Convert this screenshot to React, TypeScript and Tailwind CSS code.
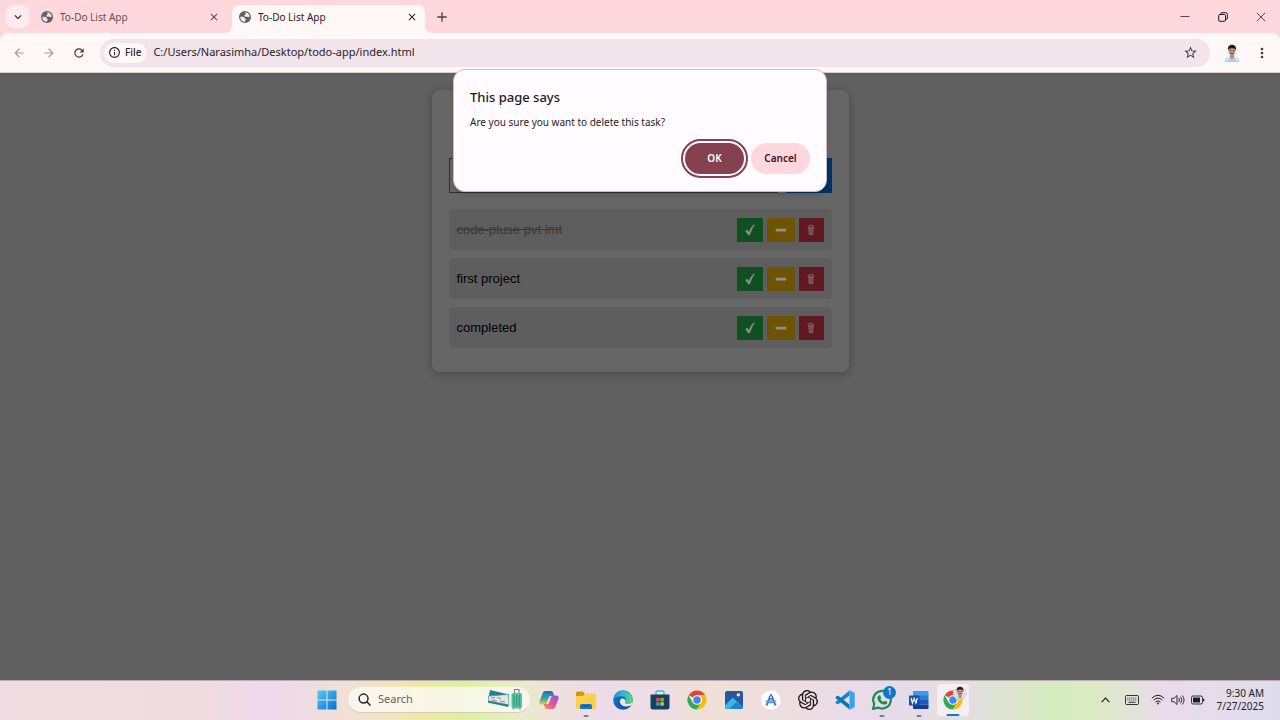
import { useState } from "react";
import type { ReactNode } from "react";
import { MdAdd, MdArrowBack, MdArrowForward, MdClose, MdExpandMore, MdInfoOutline, MdMoreVert, MdRefresh, MdStarBorder } from "react-icons/md";
import { SiOpenai } from "react-icons/si";

const TASKS = [
  { title: "code-pluse pvt lmt", done: true },
  { title: "first project", done: false },
  { title: "completed", done: false },
];

function Portrait({ className }: { className: string }) {
  return (
    <svg viewBox="0 0 16 18" className={className} aria-hidden="true">
      <path d="M0.500 18C0.800 13.500 4 12.600 8 12.600s7.200 0.900 7.500 5.400z" fill="#a9d0e8" />
      <path d="M2 17l3-3.600M14 17l-3-3.600" stroke="#e6f4fb" strokeWidth="1.200" />
      <path d="M6 10h4v3.200L8 15l-2-1.800z" fill="#b98a74" />
      <ellipse cx="8" cy="7" rx="3.600" ry="4.600" fill="#c59a86" />
      <path d="M4 6.800C3.400 3 5 0.800 8 0.800s4.600 2.200 4 6C11.600 5 10.500 4.200 8 4.300S4.400 5 4 6.800z" fill="#22191c" />
      <path d="M5.600 6.600h1.600M8.800 6.600h1.600M6.500 9.300h3" stroke="#3c2622" strokeWidth="0.800" />
    </svg>
  );
}

function Globe({ land }: { land: string }) {
  return (
    <svg viewBox="0 0 24 24" className="size-3 shrink-0" aria-hidden="true">
      <circle cx="12" cy="12" r="12" fill="#5c6168" />
      <path d="M2.500 11.500c3 0.300 6.500-0.200 8.500 1.500 1.500 1.300 0.300 2.300 2 3 1.600 0.700 0.500 2.500-0.500 3.200-0.800 0.600-0.600 1.500-0.500 2.400C6.500 21.600 2.300 17.500 2.500 11.500z" fill={land} />
      <path d="M12.500 2.500c4.500 0.200 8.600 3.600 9 8.500-1.500 1.800-3.300 1.500-4.500 0.700-1-0.700-2.500 0.500-4-0.200-1.600-0.800-2.700-1.500-2.200-3 0.400-1.200 1.900-1 2.400-2.200 0.400-1-1.200-2.200-0.700-3.800z" fill={land} />
    </svg>
  );
}

function Tab({ active = false }: { active?: boolean }) {
  return (
    <div
      className={
        active
          ? "relative flex h-7 w-[193px] items-center rounded-t-lg bg-[#fff8f6] px-[7px] pb-1 text-[#2a2024] before:absolute before:bottom-0 before:-left-2 before:size-2 before:bg-[radial-gradient(circle_at_0_0,transparent_8px,#fff8f6_8px)] after:absolute after:-right-2 after:bottom-0 after:size-2 after:bg-[radial-gradient(circle_at_100%_0,transparent_8px,#fff8f6_8px)]"
          : "flex h-7 w-[200px] items-center pr-3 pb-1 pl-[9px] text-[#6a4a52]"
      }
    >
      <Globe land={active ? "#f0ebec" : "#f6dade"} />
      <span className="ml-[7px] flex-1 truncate text-[10px] leading-6">To-Do List App</span>
      <button aria-label="Close tab" className={active ? "text-[#2a2024]" : "text-[#6a3f4a]"}>
        <MdClose className="size-3" />
      </button>
    </div>
  );
}

function BrowserHeader() {
  return (
    <header className="bg-[#ffd8de]">
      <div className="flex h-[33px] items-end pl-1.5">
        <button aria-label="Search tabs" className="mb-[5px] flex size-[23px] items-center justify-center rounded-lg bg-[#ffecef] text-[#2a1a1e]">
          <MdExpandMore className="size-[14px]" />
        </button>
        <div className="ml-[3px] flex">
          <Tab />
          <Tab active />
        </div>
        <button aria-label="New tab" className="mb-2 ml-[9px] text-[#5a3a42]">
          <MdAdd className="size-4" />
        </button>
        <div className="flex flex-1 items-center justify-end gap-7 self-center pr-3.5 text-[#4a3338]">
          <button aria-label="Minimize">
            <svg viewBox="0 0 10 10" className="size-2.5" aria-hidden="true"><path d="M0.500 4.500h9" stroke="currentColor" strokeWidth="0.900" /></svg>
          </button>
          <button aria-label="Restore">
            <svg viewBox="0 0 10 10" className="size-2.5 text-[#20181a]" fill="none" stroke="currentColor" aria-hidden="true">
              <rect x="0.700" y="2.500" width="6.800" height="6.800" rx="1.200" />
              <path d="M2.800 2.300V1.900q0-1.200 1.200-1.200h3.800q1.600 0 1.600 1.600v3.800q0 1.200-1.200 1.200H7.800" />
            </svg>
          </button>
          <button aria-label="Close window">
            <svg viewBox="0 0 10 10" className="size-2.5" aria-hidden="true"><path d="M0.800 0.800l8.400 8.400M9.200 0.800L0.800 9.200" stroke="currentColor" strokeWidth="0.900" /></svg>
          </button>
        </div>
      </div>
      <div className="flex h-10 items-center rounded-t-lg border-b border-[#d9cdd0] bg-[#fff8f6] pr-2.5 pl-3">
        <button aria-label="Back" className="text-[#a79a9d]"><MdArrowBack className="size-[14px]" /></button>
        <button aria-label="Forward" className="ml-4 text-[#a79a9d]"><MdArrowForward className="size-[14px]" /></button>
        <button aria-label="Reload" className="ml-4 text-[#54383f]"><MdRefresh className="size-[14px]" /></button>
        <div className="ml-3.5 flex h-7 flex-1 items-center rounded-full bg-[#f1e4eb] pr-3 pl-1">
          <button className="flex h-5 items-center gap-1 rounded-full bg-[#fff8f8] pr-1.5 pl-1 text-[10px] font-medium text-[#2d2226]">
            <MdInfoOutline className="size-[13px]" />
            File
          </button>
          <input
            aria-label="Address"
            defaultValue="C:/Users/Narasimha/Desktop/todo-app/index.html"
            className="ml-1.5 min-w-0 flex-1 bg-transparent text-[11px] text-[#2a2226] outline-none"
          />
          <button aria-label="Bookmark this page" className="text-[#4d3a40]"><MdStarBorder className="size-[15px]" /></button>
        </div>
        <button aria-label="Profile" className="ml-3.5"><Portrait className="h-[18px] w-4" /></button>
        <button aria-label="More options" className="ml-3.5 text-[#4d353b]"><MdMoreVert className="size-4" /></button>
      </div>
    </header>
  );
}

function TaskRow({ title, done }: { title: string; done: boolean }) {
  return (
    <li className="flex h-[41px] items-center gap-1 rounded bg-[#5e5e5e] px-2">
      <span className={done ? "flex-1 text-[#393939] line-through" : "flex-1 text-black"}>{title}</span>
      <button aria-label="Complete" className="flex h-6 w-[26px] items-center justify-center bg-[#104f20]">
        <svg viewBox="0 0 12 12" className="size-3" aria-hidden="true"><path d="M1.600 7l1.600-1 1.700 2.400C6 5.500 7.600 2.800 9.700 0.700L10.400 1.100C8.400 4 7 7 5.700 10.900H4.300z" fill="#8e8e8e" stroke="#8e8e8e" strokeWidth="0.500" /></svg>
      </button>
      <button aria-label="Undo" className="flex h-6 w-7 items-center justify-center bg-[#6e5303]">
        <svg viewBox="0 0 12 12" className="size-3" aria-hidden="true"><rect x="0.700" y="4.700" width="10.600" height="2.800" rx="0.700" fill="#8e8e8e" /></svg>
      </button>
      <button aria-label="Delete" className="flex h-6 w-[25px] items-center justify-center bg-[#611820]">
        <svg viewBox="0 0 12 12" className="size-3" aria-hidden="true">
          <path d="M3.400 3.200h5.200l-0.400 7.600q-2.200 0.700-4.400 0z" fill="#806769" />
          <ellipse cx="6" cy="2.700" rx="3" ry="1.300" fill="#5a3034" stroke="#8e7779" strokeWidth="0.700" />
          <path d="M4.900 4.500v5.800M6 4.500v5.800M7.100 4.500v5.800" stroke="#5a3034" strokeWidth="0.500" />
        </svg>
      </button>
    </li>
  );
}

function ConfirmDialog() {
  return (
    <div role="alertdialog" aria-labelledby="confirm-title" className="absolute -top-1 left-1/2 w-[374px] -translate-x-1/2 rounded-xl border border-[#c9bcc3] bg-[#fffbff] px-4 pt-[18px] pb-[17px] shadow-md">
      <h2 id="confirm-title" className="text-[13px] leading-[18px] font-medium text-[#201a1c]">This page says</h2>
      <p className="mt-2 text-[10px] leading-4 text-[#2b2326]">Are you sure you want to delete this task?</p>
      <div className="mt-[13px] flex justify-end gap-[7px] text-[10px] font-semibold">
        <button className="h-[31px] w-[59px] rounded-full bg-[#85414f] text-white outline-2 outline-offset-2 outline-[#85414f]">OK</button>
        <button className="h-[31px] w-[59px] rounded-full bg-[#ffd8de] text-[#3f0d1b]">Cancel</button>
      </div>
    </div>
  );
}

function TodoPage() {
  const [draft, setDraft] = useState("");
  return (
    <main className="relative flex-1 bg-[#606060] pt-[17px] font-['Liberation_Sans',sans-serif]">
      <section className="mx-auto w-[417px] rounded-lg bg-[#666666] px-[17px] pt-[68px] pb-6 shadow-[0_2px_10px_rgba(0,0,0,0.25)]">
        <form className="flex h-[35px] gap-2" onSubmit={(event) => event.preventDefault()}>
          <input aria-label="New task" value={draft} onChange={(event) => setDraft(event.target.value)} className="min-w-0 flex-1 border border-[#2f2f2f] bg-[#666666] px-2 outline-none" />
          <button aria-label="Add task" className="w-[46px] bg-[#003166]" />
        </form>
        <ul className="mt-4 flex flex-col gap-2 text-[13px] leading-5">
          {TASKS.map((task) => <TaskRow key={task.title} {...task} />)}
        </ul>
      </section>
      <div className="font-['Noto_Sans',sans-serif]"><ConfirmDialog /></div>
    </main>
  );
}

function ChromeLogo({ className }: { className: string }) {
  return (
    <svg viewBox="0 0 48 48" className={className} aria-hidden="true">
      <circle cx="24" cy="24" r="23" fill="#fff" />
      <path d="M24 24L4.080 12.500A23 23 0 0 1 43.920 12.500H24z" fill="#ea4335" />
      <path d="M4.080 12.500A23 23 0 0 0 24 47L34 29.700 24 24 14 29.700z" fill="#34a853" />
      <path d="M43.920 12.500A23 23 0 0 1 24 47L34 29.700A11.500 11.500 0 0 0 24 12.500z" fill="#fbbc05" />
      <circle cx="24" cy="24" r="11.500" fill="#fff" />
      <circle cx="24" cy="24" r="9" fill="#4285f4" />
    </svg>
  );
}

function AppButton({ label, running = false, children }: { label: string; running?: boolean; children: ReactNode }) {
  return (
    <button aria-label={label} className="relative flex h-8 w-[37px] items-center justify-center">
      {children}
      {running && <span className="absolute -bottom-px left-1/2 h-0.5 w-[5px] -translate-x-1/2 rounded-full bg-[#85797e]" />}
    </button>
  );
}

function Taskbar() {
  return (
    <footer className="flex h-10 items-center border-t border-[#b9adb0] bg-[linear-gradient(90deg,#f0dce2_0%,#f0dce0_16%,#eed9ec_21%,#f1dfdc_26%,#f0e5c4_30%,#ede8a6_33%,#deefa2_36%,#e6eec4_40%,#efe1dc_43%,#ecdcea_47%,#efe0d9_56%,#eddde2_63%,#e6dbea_69%,#e3dfdf_76%,#d6ebc0_82%,#daebc0_85%,#eadbeb_91%,#dedcec_100%)] pb-0.5">
      <nav aria-label="Applications" className="ml-[308px] flex items-center">
        <AppButton label="Start">
          <svg viewBox="0 0 20 20" className="size-5" aria-hidden="true">
            <defs><linearGradient id="start" x1="0" y1="0" x2="1" y2="1"><stop stopColor="#55ccf8" /><stop offset="1" stopColor="#0870cc" /></linearGradient></defs>
            <path d="M0.500 0.500h9v9h-9zM10.500 0.500h9v9h-9zM0.500 10.500h9v9h-9zM10.500 10.500h9v9h-9z" fill="url(#start)" />
          </svg>
        </AppButton>
        <label className="ml-[3px] flex h-[26px] w-[182px] items-center rounded-full border-b border-[#d8cdbb] bg-[#fdfaf4]/80 pr-[7px] pl-2.5">
          <svg viewBox="0 0 14 14" className="size-[13px] shrink-0" fill="none" stroke="#262326" strokeWidth="1.600" aria-hidden="true"><circle cx="6" cy="6" r="4.800" /><path d="M9.500 9.500l4 4" /></svg>
          <input type="search" aria-label="Search" placeholder="Search" className="ml-[7px] w-[70px] min-w-0 flex-1 bg-transparent text-[11px] text-[#5f5b58] outline-none placeholder:text-[#66615e]" />
          <svg viewBox="0 0 36 22" className="h-[22px] w-9 shrink-0" aria-hidden="true">
            <path d="M3 2l19 4.500-1 6L1.500 9z" fill="#277f91" />
            <path d="M1.500 8l20-1.500 0.500 11-20.500-3z" fill="#d9edef" stroke="#4c98a2" strokeWidth="0.700" />
            <path d="M1.500 12.500l20 4-0.500 2.500-20-4.500z" fill="#2c8192" />
            <path d="M4 10l4-0.500M10 9.500l4 1M5 12l5 1M13 13l5 1" stroke="#d06f60" strokeWidth="1" />
            <path d="M27.500 6V1.500h4.500V6" fill="none" stroke="#777f80" strokeWidth="1.100" />
            <rect x="24.500" y="5" width="10.500" height="15.500" rx="2" fill="#54bda4" />
            <path d="M27 7v11M29.700 7v11M32.400 7v11" stroke="#2f957f" strokeWidth="0.900" />
            <path d="M26.500 20.500v1M33 20.500v1" stroke="#47645d" strokeWidth="1.200" />
          </svg>
        </label>
        <AppButton label="Copilot">
          <svg viewBox="0 0 20 20" className="size-5" aria-hidden="true">
            <defs>
              <linearGradient id="cpa" x1="0" y1="0" x2="0" y2="1"><stop stopColor="#1c68c8" /><stop offset="0.550" stopColor="#31a9a0" /><stop offset="1" stopColor="#eccb2d" /></linearGradient>
              <linearGradient id="cpb" x1="1" y1="0" x2="0" y2="1"><stop stopColor="#8955e8" /><stop offset="0.550" stopColor="#e65693" /><stop offset="1" stopColor="#f79a4e" /></linearGradient>
            </defs>
            <path d="M15.200 6L14.200 2.500Q13.700 0.900 12 0.900H6.500Q4.500 0.900 3.800 3L0.500 11.200Q-0.200 14.500 2.600 14.500H5.500Q7.500 14.500 8.100 12.500L9.700 7.500Q10.200 6 11.700 6z" fill="url(#cpa)" />
            <path d="M4.800 14L5.800 17.500Q6.300 19.100 8 19.100H13.500Q15.500 19.100 16.200 17L19.500 8.800Q20.200 5.500 17.400 5.500H14.500Q12.500 5.500 11.900 7.500L10.300 12.500Q9.800 14 8.300 14z" fill="url(#cpb)" />
          </svg>
        </AppButton>
        <AppButton label="File Explorer" running>
          <svg viewBox="0 0 22 20" className="h-5 w-[22px]" aria-hidden="true">
            <path d="M1 3q0-1.500 1.500-1.500H8l2 2.500-2 2H1z" fill="#d99613" />
            <path d="M1 6h7.500L11 3.500h9q1.200 0 1.200 1.200v12.800q0 1.500-1.500 1.500H2.500Q1 19 1 17.500z" fill="#fdd04b" />
            <path d="M5 19v-3.500Q5 14 6.500 14h9Q17 14 17 15.500V19z" fill="#1779c6" /><path d="M7.500 16h7" stroke="#0a4f8e" strokeWidth="1" />
          </svg>
        </AppButton>
        <AppButton label="Edge">
          <svg viewBox="0 0 20 20" className="size-5" aria-hidden="true">
            <defs>
              <linearGradient id="eda" x1="0" y1="0.500" x2="1" y2="0.500"><stop stopColor="#258fdc" /><stop offset="0.550" stopColor="#30bed0" /><stop offset="1" stopColor="#68d65c" /></linearGradient>
              <linearGradient id="edb" x1="0" y1="0" x2="1" y2="1"><stop stopColor="#1680d4" /><stop offset="1" stopColor="#0c4494" /></linearGradient>
            </defs>
            <circle cx="10" cy="10" r="9.800" fill="url(#edb)" />
            <path d="M0.300 9.500A9.800 9.800 0 0 1 19.800 9.500C20 12.600 17.600 14 15 14c-2.200 0-3.300-0.800-2.700-1.800 1.800-3-0.300-5.900-4-5.900C4.600 6.300 1.400 7.500 0.300 9.500z" fill="url(#eda)" />
            <path d="M8.500 8.500c-1.500 1-2 3-1.200 4.700 1.400 3.200 5.700 4.300 10.900 2l0.800-0.700 1-3.500C19 13.300 17 14 15 14c-2.200 0-3.300-0.800-2.700-1.800 0.800-1.500-0.300-4-3.800-3.700z" fill="#f1e5e4" />
          </svg>
        </AppButton>
        <AppButton label="Microsoft Store">
          <svg viewBox="0 0 20 20" className="size-5" aria-hidden="true">
            <path d="M6 5V2.500Q6 1 7.500 1h5Q14 1 14 2.500V5" fill="none" stroke="#35b6df" strokeWidth="1.400" />
            <path d="M0.500 4.500h19v12.500q0 2.500-2.500 2.500H3Q0.500 19.500 0.500 17z" fill="#173f68" />
            <path d="M6.200 8h3.400v3.400H6.200z" fill="#ef5327" /><path d="M10.400 8h3.400v3.400h-3.400z" fill="#80ba2d" /><path d="M6.200 12.200h3.400v3.400H6.200z" fill="#27a4e8" /><path d="M10.400 12.200h3.400v3.400h-3.400z" fill="#fbb921" />
          </svg>
        </AppButton>
        <AppButton label="Chrome"><ChromeLogo className="size-5" /></AppButton>
        <AppButton label="Photos">
          <svg viewBox="0 0 20 20" className="size-5" aria-hidden="true">
            <rect x="1" y="1" width="18" height="18" rx="2" fill="#28589f" />
            <path d="M1 15.500l6.700-7q1-1 2 0L19 17q-0.300 2-2 2H3q-2 0-2-2z" fill="#3ab8ec" /><path d="M5 19l7.500-7L19 17q-0.300 2-2 2z" fill="#1c83d3" />
            <circle cx="14.300" cy="4.800" r="1.600" fill="#fff" />
          </svg>
        </AppButton>
        <AppButton label="Android Studio">
          <svg viewBox="0 0 20 20" className="size-5" fill="none" aria-hidden="true">
            <circle cx="10" cy="10" r="9.700" fill="#fdfdff" />
            <path d="M10 4v2.500" stroke="#35608e" strokeWidth="1.400" />
            <path d="M9.300 6.500L5.500 15.500M10.700 6.500l3.800 9" stroke="#3e7fe0" strokeWidth="2.100" />
            <path d="M4.800 10.800q5.200 3.800 10.400 0" stroke="#4f91e8" strokeWidth="1.400" />
            <circle cx="10" cy="7.300" r="1.600" stroke="#285ea8" strokeWidth="1.100" fill="#fff" /><path d="M10 9.500v3" stroke="#3eb978" strokeWidth="1.500" />
          </svg>
        </AppButton>
        <AppButton label="ChatGPT"><SiOpenai className="size-5 text-[#171417]" /></AppButton>
        <AppButton label="Visual Studio Code">
          <svg viewBox="0 0 20 20" className="size-5" aria-hidden="true">
            <path d="M14.500 0.500v5L3.200 14.300 1.800 14 0.500 12.800V12z" fill="#1685ca" />
            <path d="M14.500 19.500v-5L3.200 5.700 1.800 6 0.500 7.200V8z" fill="#1072b5" />
            <path d="M14.500 0.300l4.500 2.200q0.700 0.300 0.700 1.200v12.600q0 0.900-0.700 1.200l-4.500 2.200z" fill="#33a6ef" />
          </svg>
        </AppButton>
        <AppButton label="WhatsApp" running>
          <svg viewBox="0 0 22 22" className="size-[22px]" fill="none" aria-hidden="true">
            <path d="M2 20l1.300-5A8.800 8.800 0 1 1 7 18.600z" stroke="#1d8a4e" strokeWidth="2.200" strokeLinejoin="round" />
            <path d="M7.600 6.400l1.500-0.200 1.200 2.700-1 1.300q1.100 2 3.300 2.900l1.200-1.300 2.500 1.200q0 2.600-2.900 2.600-5.600-0.700-7.100-6.300 0-1.900 1.300-2.900z" fill="#1d8a4e" />
          </svg>
          <span className="absolute top-0.5 right-1 flex size-[13px] items-center justify-center rounded-full bg-[#0878d0] text-[9px] text-white">1</span>
        </AppButton>
        <AppButton label="Word" running>
          <svg viewBox="0 0 20 20" className="size-5" aria-hidden="true">
            <path d="M5 1h13.500q1 0 1 1v4H4V2q0-1 1-1z" fill="#3e9ae8" /><path d="M4 5.500h15.500V10H4z" fill="#2b7cd3" /><path d="M4 10h15.500v4.500H4z" fill="#185abd" /><path d="M4 14.500h15.500V18q0 1-1 1H5q-1 0-1-1z" fill="#103f91" />
            <rect y="5.500" width="10.500" height="10" rx="0.800" fill="#174faa" />
            <path d="M2 8l1.400 5 1.700-4.500L6.900 13 8.300 8" fill="none" stroke="#fff" strokeWidth="1.200" />
          </svg>
        </AppButton>
        <button aria-label="Chrome, Narasimha" className="relative flex size-8 items-center justify-center rounded bg-[#f7eef0]">
          <ChromeLogo className="size-5" />
          <span className="absolute top-0.5 right-0.5 flex size-[14px] justify-center overflow-hidden rounded-full bg-[#e1dedf]"><Portrait className="h-[15px] w-3.5" /></span>
          <span className="absolute bottom-0 left-1/2 h-0.5 w-[13px] -translate-x-1/2 rounded-full bg-[#1278c8]" />
        </button>
      </nav>
      <div className="ml-auto flex items-center pr-4 text-[#201c20]">
        <svg viewBox="0 0 10 6" className="h-1.5 w-[9px]" fill="none" stroke="currentColor" strokeWidth="1.300" aria-hidden="true"><path d="M0.700 5.300L5 1l4.300 4.300" /></svg>
        <svg viewBox="0 0 14 10" className="ml-[15px] h-2.5 w-3.5" fill="none" stroke="currentColor" aria-hidden="true"><rect x="0.500" y="0.500" width="13" height="9" rx="1" strokeWidth="0.900" /><path d="M2.300 3h9.600M2.300 5h9.600" strokeDasharray="1 1" strokeWidth="0.900" /><path d="M3.500 7.300h7" strokeWidth="0.900" /></svg>
        <svg viewBox="0 0 14 11" className="ml-3 h-[11px] w-3.5" fill="none" stroke="currentColor" strokeWidth="1" aria-hidden="true"><path d="M0.800 4.200q6.200-5.800 12.400 0M2.700 6.100q4.300-4 8.600 0M4.500 8q2.500-2.200 5 0" /><circle cx="7" cy="9.500" r="0.900" fill="currentColor" stroke="none" /></svg>
        <svg viewBox="0 0 14 12" className="ml-1.5 h-3 w-3.5" fill="none" stroke="currentColor" strokeWidth="0.900" aria-hidden="true"><path d="M0.700 4.300H3L6 1.500v9L3 7.700H0.700zM7.800 4q1.400 2 0 4M9.600 2.700q2.400 3.300 0 6.600M11.400 1.500q3.300 4.500 0 9" /></svg>
        <svg viewBox="0 0 14 10" className="ml-1.5 h-2.5 w-3.5" fill="none" stroke="currentColor" aria-hidden="true"><rect x="0.500" y="1" width="11" height="8" rx="1.500" strokeWidth="0.900" /><rect x="2" y="2.500" width="7" height="5" fill="currentColor" stroke="none" /><path d="M12.700 3.700v2.600" strokeWidth="1.200" /></svg>
        <div className="ml-3 text-right text-[10px] leading-[13px]"><p>9:30 AM</p><p>7/27/2025</p></div>
      </div>
    </footer>
  );
}

export default function App() {
  return (
    <div className="flex min-h-screen flex-col font-['Noto_Sans',sans-serif]">
      <BrowserHeader />
      <TodoPage />
      <Taskbar />
    </div>
  );
}
